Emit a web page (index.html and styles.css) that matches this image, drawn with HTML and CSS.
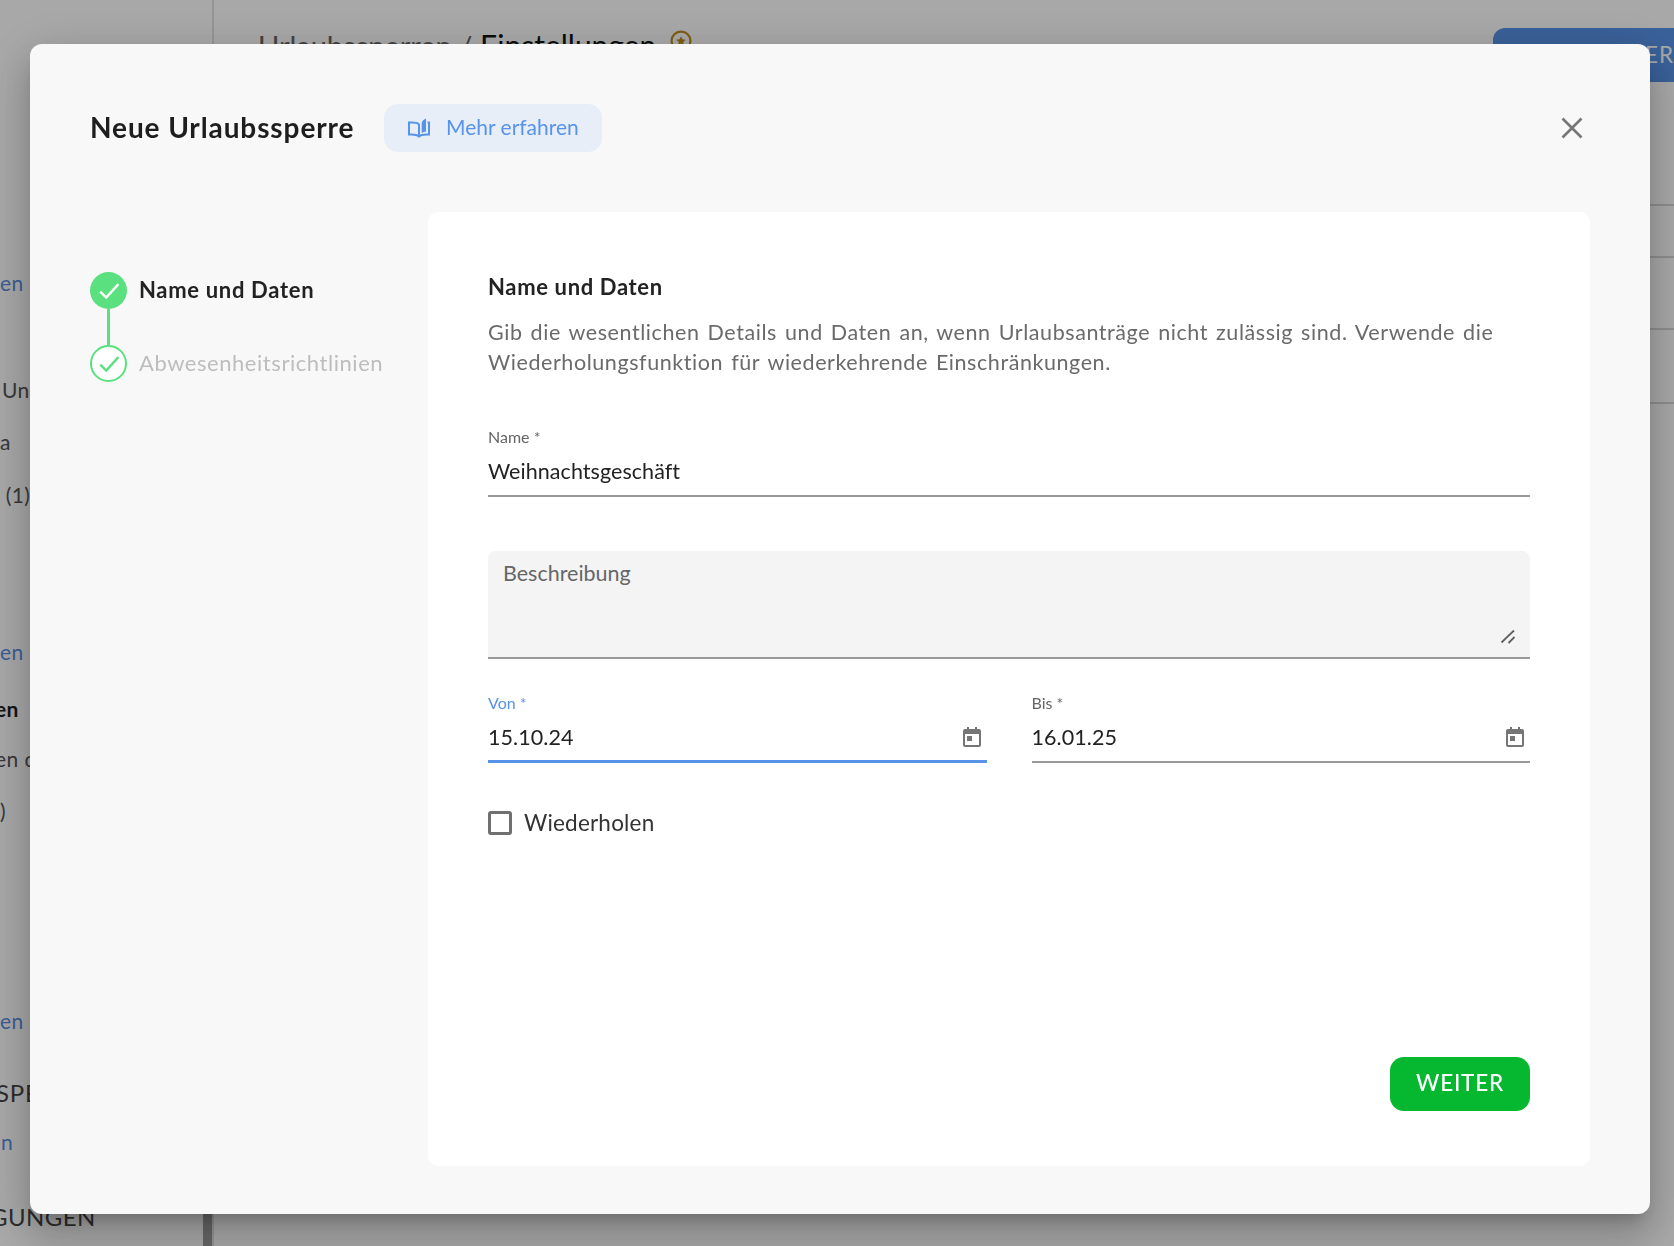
FILE: index.html
```html
<!DOCTYPE html>
<html lang="de">
<head>
<meta charset="utf-8">
<title>Neue Urlaubssperre</title>
<link rel="stylesheet" href="styles.css">
</head>
<body>
<div class="page">
  <aside class="side">
    <p class="si link s1">en</p>
    <p class="si dim s2">Un</p>
    <p class="si dim s3">a</p>
    <p class="si dim s4">&nbsp;(1)</p>
    <p class="si link s5">en</p>
    <p class="si strong s6">en</p>
    <p class="si dim s7">en d</p>
    <p class="si dim s8">)</p>
    <p class="si link s9">en</p>
    <p class="si big s10">SPE</p>
    <p class="si link s11">n</p>
    <p class="si big s12">GUNGEN</p>
    <div class="thumb"></div>
  </aside>
  <main class="main">
    <header class="main-head">
      <h2 class="crumb"><span class="crumb-a">Urlaubssperren /</span> Einstellungen</h2>
      <svg class="coin" viewBox="0 0 20 20"><circle cx="10" cy="10" r="8.6" fill="none" stroke="#bd8d1c" stroke-width="2"/><path d="M10 5.6l1.3 2.9 3.1.3-2.4 2 .8 3.1-2.8-1.7-2.8 1.7.8-3.1-2.4-2 3.1-.3z" fill="#bd8d1c"/></svg>
      <div class="cta">NEUE SPERRE</div>
    </header>
    <div class="rule r1"></div>
    <div class="rule r2"></div>
    <div class="rule r3"></div>
    <div class="rule r4"></div>
  </main>
</div>

<div class="overlay">
  <section class="modal">
    <header class="modal-head">
      <h1 class="title">Neue Urlaubssperre</h1>
      <a class="learn">
        <svg class="book" viewBox="0 0 24 20" fill="none" stroke="#5793e8" stroke-width="2"><path d="M12 6C10 4.500 6 4.200 2 4.500V16.500C6 16.200 10 16.500 12 18.500C14 16.500 18 16.200 22 16.500V4.500H20.500"/><path d="M12 6v12"/><path d="M19 .5C16.500 1.500 14.700 3.200 14.700 6V15C16 14 17.500 13.600 19 13.400Z" fill="#5793e8" stroke="none"/></svg>
        <span class="learn-text">Mehr erfahren</span>
      </a>
      <svg class="close" viewBox="0 0 22 22" fill="none" stroke="#767676" stroke-width="2.600"><path d="M1.500 1.500l19 19M20.500 1.500l-19 19"/></svg>
    </header>
    <div class="modal-body">
      <nav class="steps">
        <div class="step">
          <span class="dot dot-on"><svg viewBox="0 0 24 24" fill="none" stroke="#fff" stroke-width="1.900"><path d="M5 12.500l4.800 4.800L19.500 6.500"/></svg></span>
          <span class="step-label on">Name und Daten</span>
        </div>
        <div class="connector"></div>
        <div class="step">
          <span class="dot dot-off"><svg viewBox="0 0 24 24" fill="none" stroke="#5be07f" stroke-width="1.900"><path d="M5 12.500l4.800 4.800L19.500 6.500"/></svg></span>
          <span class="step-label">Abwesenheitsrichtlinien</span>
        </div>
      </nav>
      <div class="panel">
        <h3 class="sec-title">Name und Daten</h3>
        <p class="sec-text">Gib die wesentlichen Details und Daten an, wenn Urlaubsanträge nicht zulässig sind. Verwende die Wiederholungsfunktion für wiederkehrende Einschränkungen.</p>

        <div class="field f-name">
          <label class="f-label">Name *</label>
          <div class="f-value">Weihnachtsgeschäft</div>
        </div>

        <div class="area">
          <span class="area-ph">Beschreibung</span>
          <svg class="grip" viewBox="0 0 16 16" fill="none" stroke="#5f5f5f" stroke-width="1.800"><path d="M1.500 13.500L14 1.500M8.500 14L14.500 8"/></svg>
        </div>

        <div class="dates">
          <div class="field focus">
            <label class="f-label">Von *</label>
            <div class="f-value f-row">15.10.24
              <svg class="cal" viewBox="0 0 18 20"><path d="M4 0h2v2h6V0h2v2h2a2 2 0 0 1 2 2v14a2 2 0 0 1-2 2H2a2 2 0 0 1-2-2V4a2 2 0 0 1 2-2h2zM2 7v11h14V7z" fill="#757575"/><rect x="4" y="9" width="5" height="5" fill="#757575"/></svg>
            </div>
          </div>
          <div class="field">
            <label class="f-label">Bis *</label>
            <div class="f-value f-row">16.01.25
              <svg class="cal" viewBox="0 0 18 20"><path d="M4 0h2v2h6V0h2v2h2a2 2 0 0 1 2 2v14a2 2 0 0 1-2 2H2a2 2 0 0 1-2-2V4a2 2 0 0 1 2-2h2zM2 7v11h14V7z" fill="#757575"/><rect x="4" y="9" width="5" height="5" fill="#757575"/></svg>
            </div>
          </div>
        </div>

        <label class="check"><span class="box"></span><span class="check-text">Wiederholen</span></label>

        <div class="actions"><button class="next"><span class="next-text">WEITER</span></button></div>
      </div>
    </div>
  </section>
</div>
</body>
</html>
```
FILE: styles.css
```css
* { box-sizing: border-box; }
html, body { margin: 0; height: 100%; }
body { width: 1674px; height: 1246px; overflow: hidden; background: #fff; font-family: "Lato", "Noto Sans", sans-serif; color: #222; }
h1, h2, h3, p { margin: 0; font-weight: inherit; }

.page { display: flex; height: 1246px; overflow: hidden; }
.side { position: relative; width: 214px; flex: none; border-right: 2px solid #e2e2e2; overflow: hidden; padding-top: 270px; }
.thumb { position: absolute; right: 0; bottom: 0; width: 9px; height: 120px; background: #9c9c9c; }
.si { white-space: nowrap; font-size: 21px; line-height: 26px; height: 26px; color: #555; letter-spacing: .4px; }
.link { color: #5a8ee0; }
.strong { font-weight: 700; color: #222; margin-left: -5px; }
.big { font-size: 24px; line-height: 30px; height: 30px; color: #444; letter-spacing: .8px; }
.s2 { margin-top: 81px; margin-left: 2px; }
.s3 { margin-top: 26px; }
.s4 { margin-top: 27px; }
.s5 { margin-top: 131px; }
.s6 { margin-top: 31px; }
.s7 { margin-top: 24px; margin-left: -5px; }
.s8 { margin-top: 26px; }
.s9 { margin-top: 184px; }
.s10 { margin-top: 44px; margin-left: -4px; }
.s11 { margin-top: 21px; margin-left: 1px; }
.s12 { margin-top: 47px; margin-left: -10px; letter-spacing: .4px; }

.main { flex: 1; min-width: 0; position: relative; padding-left: 44px; }
.main-head { display: flex; align-items: flex-start; height: 204px; }
.crumb { font-size: 30px; line-height: 40px; margin-top: 25px; color: #111; white-space: nowrap; flex: none; }
.crumb-a { color: #666; font-size: 29px; }
.coin { width: 22px; height: 22px; margin: 30px 0 0 14px; flex: none; }
.cta { margin-left: 801px; margin-top: 28px; width: 240px; height: 54px; border-radius: 12px; background: #5793e8; color: #fff; font-size: 22.500px; letter-spacing: .8px; line-height: 54px; padding-left: 55px; white-space: nowrap; flex: none; }
.rule { height: 2px; background: #d8d8d8; }
.r2 { margin-top: 50px; }
.r3 { margin-top: 70px; }
.r4 { margin-top: 72px; }

.overlay { position: fixed; inset: 0; background: rgba(0,0,0,.34); padding: 44px 24px 32px 30px; }
.modal { height: 100%; background: #f8f8f8; border-radius: 12px; padding: 63px 60px 48px; display: flex; flex-direction: column; box-shadow: 0 11px 15px -7px rgba(0,0,0,.2), 0 24px 38px 3px rgba(0,0,0,.14), 0 9px 46px 8px rgba(0,0,0,.12); }
.modal-head { display: flex; align-items: center; height: 42px; }
.title { font-size: 28px; font-weight: 700; color: #1e1e1e; letter-spacing: .9px; white-space: nowrap; width: 294px; margin-top: -2px; }
.learn { display: flex; align-items: center; width: 218px; height: 48px; background: #e8eef7; border-radius: 14px; color: #5793e8; font-size: 21px; padding-left: 23px; }
.learn-text { margin-top: -4px; }
.book { width: 24px; height: 20px; margin-right: 15px; }
.close { width: 22px; height: 22px; margin-left: auto; margin-right: 7px; }

.modal-body { flex: 1; display: flex; margin-top: 63px; min-height: 0; }
.steps { width: 338px; flex: none; padding-top: 60px; }
.step { display: flex; align-items: center; gap: 12px; height: 37px; }
.dot { width: 37px; height: 37px; border-radius: 50%; flex: none; display: flex; align-items: center; justify-content: center; }
.dot svg { width: 30px; height: 30px; }
.dot-on { background: #5be07f; }
.dot-off { background: #fff; border: 2.500px solid #5be07f; }
.connector { width: 3px; height: 36px; background: #5be07f; margin-left: 17px; }
.step-label { font-size: 22px; color: #bdbdbd; white-space: nowrap; letter-spacing: .55px; margin-top: -2px; }
.step-label.on { font-weight: 700; color: #222; letter-spacing: .68px; }

.panel { flex: 1; min-width: 0; background: #fff; border-radius: 10px; padding: 60px 60px 55px; display: flex; flex-direction: column; }
.sec-title { font-size: 22px; font-weight: 700; color: #222; line-height: 30px; letter-spacing: .65px; }
.sec-text { font-size: 21.500px; line-height: 30px; color: #6a6a6a; margin-top: 15px; letter-spacing: .57px; word-spacing: 2px; }
.field { flex: 1; min-width: 0; border-bottom: 2px solid #999; }
.f-name { flex: none; margin-top: 50px; }
.f-label { display: block; font-size: 16px; line-height: 20px; color: #666; }
.f-value { font-size: 21.500px; line-height: 28px; color: #222; margin-top: 10px; height: 38px; letter-spacing: .06px; }
.f-row { display: flex; justify-content: space-between; padding-right: 6px; }
.cal { width: 18px; height: 20px; margin-top: 4px; }
.focus { border-bottom: 3px solid #5793e8; }
.focus .f-label { color: #5793e8; }
.focus .f-value { height: 37px; }

.area { position: relative; height: 108px; margin-top: 54px; background: #f4f4f4; border-bottom: 2px solid #999; border-radius: 8px 8px 0 0; padding: 8px 15px; }
.area-ph { font-size: 21.500px; line-height: 28px; color: #666; }
.grip { position: absolute; right: 14px; bottom: 12px; width: 16px; height: 16px; }

.dates { display: flex; gap: 45px; margin-top: 34px; }
.check { display: flex; align-items: center; gap: 12px; margin-top: 47px; font-size: 22.500px; color: #333; letter-spacing: .2px; }
.check-text { margin-top: -1px; }
.box { width: 24px; height: 24px; border: 3px solid #707070; border-radius: 3px; background: #fff; }
.actions { margin-top: auto; display: flex; justify-content: flex-end; }
.next { width: 140px; height: 54px; border: 0; border-radius: 14px; background: #06b82f; color: #fff; font: inherit; font-size: 22.500px; font-weight: 500; letter-spacing: .8px; padding: 0; }
.next-text { display: block; margin-top: -4px; }
```
